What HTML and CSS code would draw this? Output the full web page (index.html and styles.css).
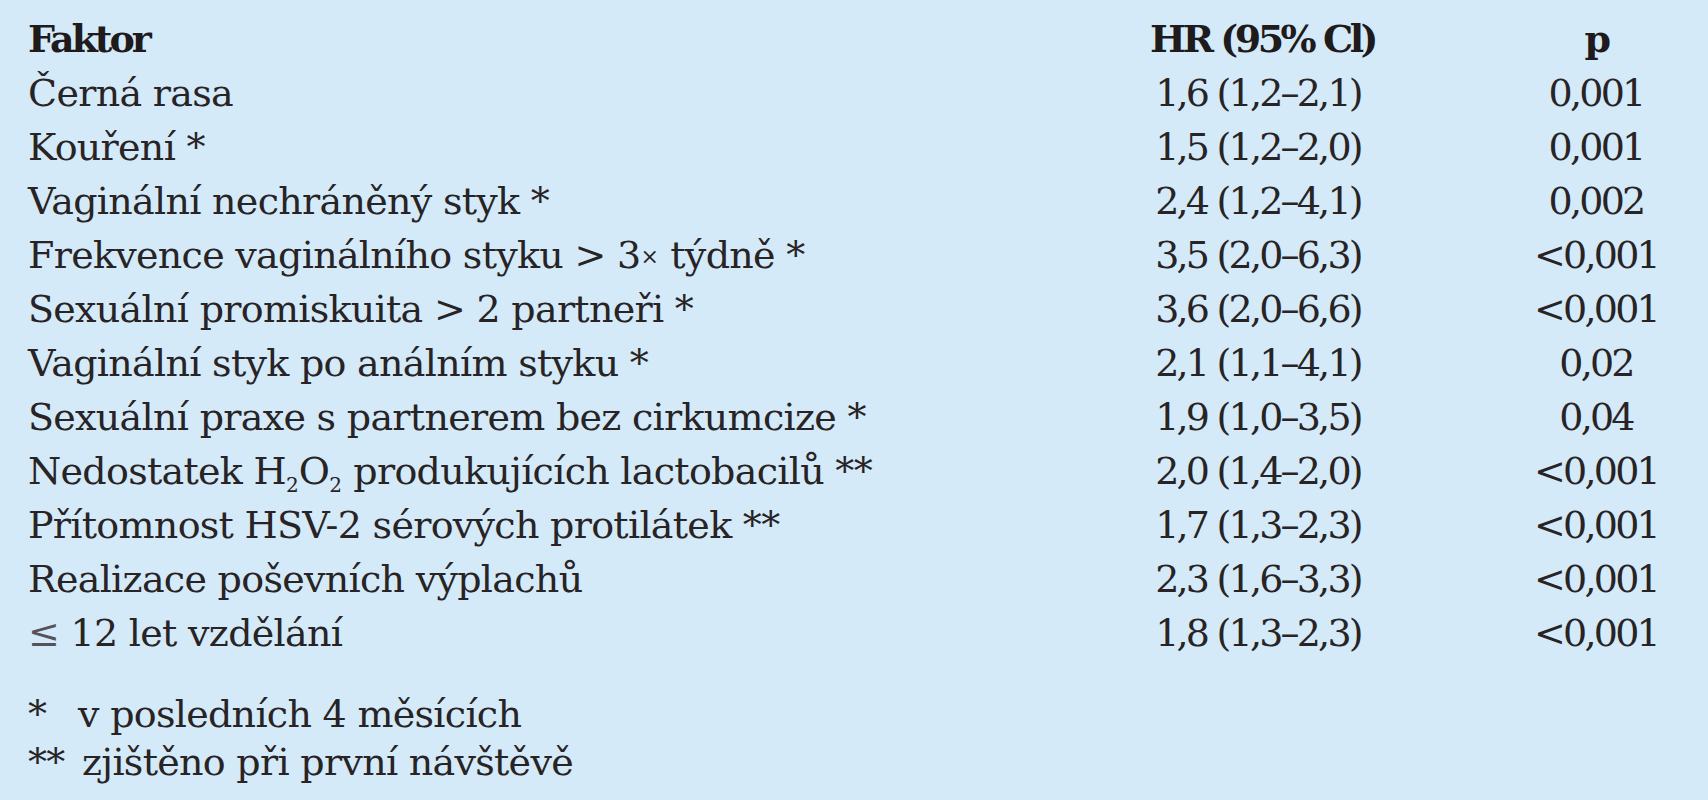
FILE: index.html
```html
<!DOCTYPE html>
<html lang="cs">
<head>
<meta charset="utf-8">
<title>Rizikové faktory</title>
<link rel="stylesheet" href="styles.css">
</head>
<body>
<div class="page">
  <div class="table">
    <div class="cell head">Faktor</div>
    <div class="cell head num">HR (95% Cl)</div>
    <div class="cell head num">p</div>

    <div class="cell">Černá rasa</div>
    <div class="cell num">1,6 (1,2–2,1)</div>
    <div class="cell num">0,001</div>

    <div class="cell">Kouření *</div>
    <div class="cell num">1,5 (1,2–2,0)</div>
    <div class="cell num">0,001</div>

    <div class="cell">Vaginální nechráněný styk *</div>
    <div class="cell num">2,4 (1,2–4,1)</div>
    <div class="cell num">0,002</div>

    <div class="cell">Frekvence vaginálního styku &gt; 3<span class="times">×</span> týdně *</div>
    <div class="cell num">3,5 (2,0–6,3)</div>
    <div class="cell num">&lt;0,001</div>

    <div class="cell">Sexuální promiskuita &gt; 2 partneři *</div>
    <div class="cell num">3,6 (2,0–6,6)</div>
    <div class="cell num">&lt;0,001</div>

    <div class="cell">Vaginální styk po análním styku *</div>
    <div class="cell num">2,1 (1,1–4,1)</div>
    <div class="cell num">0,02</div>

    <div class="cell">Sexuální praxe s partnerem bez cirkumcize *</div>
    <div class="cell num">1,9 (1,0–3,5)</div>
    <div class="cell num">0,04</div>

    <div class="cell">Nedostatek H<sub>2</sub>O<sub>2</sub> produkujících lactobacilů **</div>
    <div class="cell num">2,0 (1,4–2,0)</div>
    <div class="cell num">&lt;0,001</div>

    <div class="cell">Přítomnost HSV-2 sérových protilátek **</div>
    <div class="cell num">1,7 (1,3–2,3)</div>
    <div class="cell num">&lt;0,001</div>

    <div class="cell">Realizace poševních výplachů</div>
    <div class="cell num">2,3 (1,6–3,3)</div>
    <div class="cell num">&lt;0,001</div>

    <div class="cell"><span class="le">≤</span> 12 let vzdělání</div>
    <div class="cell num">1,8 (1,3–2,3)</div>
    <div class="cell num">&lt;0,001</div>
  </div>

  <div class="notes">
    <p class="note"><span class="mark mark-1">*</span>v posledních 4 měsících</p>
    <p class="note"><span class="mark mark-2">**</span>zjištěno při první návštěvě</p>
  </div>
</div>
</body>
</html>
```

FILE: styles.css
```css
html, body {
  margin: 0;
  padding: 0;
}

body {
  background: #d4eaf9;
  color: #282324;
  font-family: "DejaVu Serif", "Liberation Serif", serif;
  font-size: 38px;
  letter-spacing: -0.7px;
}

.page {
  width: 1708px;
  height: 800px;
  box-sizing: border-box;
  padding: 12px 2px 0 28px;
  overflow: hidden;
}

.table {
  display: grid;
  grid-template-columns: 1fr 216px 220px;
  column-gap: 120px;
  grid-auto-rows: 54px;
  line-height: 54px;
}

.cell {
  white-space: nowrap;
}

.head {
  font-weight: bold;
  color: #1f1a1b;
  letter-spacing: -3px;
}

.num {
  text-align: center;
  letter-spacing: -2.8px;
}

.head.num {
  letter-spacing: -3.5px;
}

.times {
  font-size: 22px;
  vertical-align: 4px;
  letter-spacing: 0;
}

sub {
  font-size: 20px;
  line-height: 0;
  vertical-align: -8px;
  letter-spacing: 0;
}

.le {
  color: #55525a;
}

.notes {
  margin-top: 30px;
  line-height: 48px;
}

.note {
  margin: 0;
  white-space: nowrap;
}

.mark {
  display: inline-block;
}

.mark-1 {
  width: 50px;
}

.mark-2 {
  width: 54px;
}
```
